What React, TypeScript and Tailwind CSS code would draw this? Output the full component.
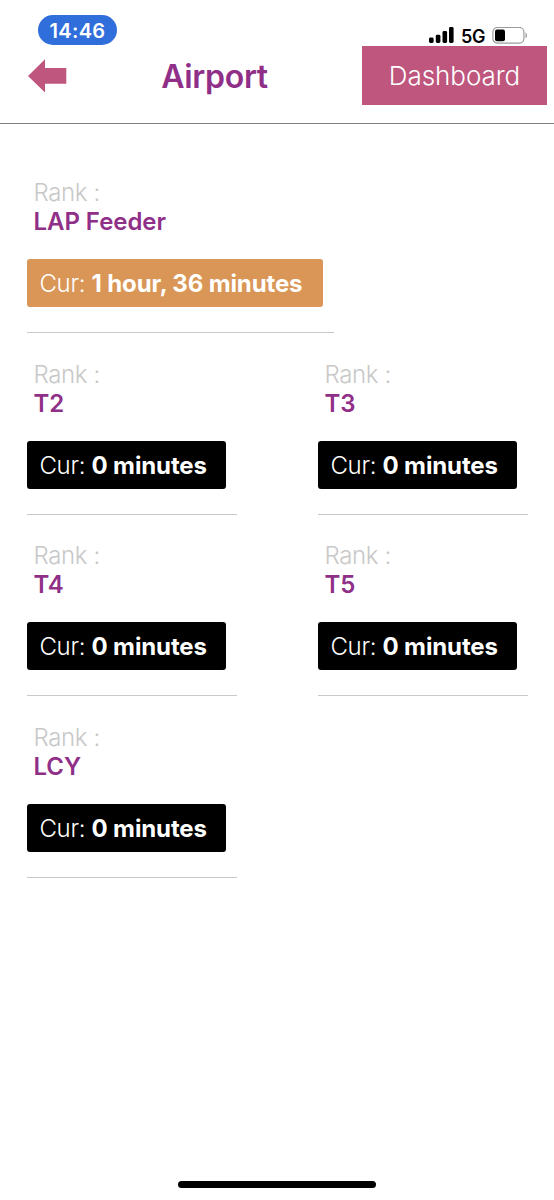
type Rank = {
  name: string;
  current: string;
  delayed?: boolean;
};

const ranks: Rank[] = [
  { name: "LAP Feeder", current: "1 hour, 36 minutes", delayed: true },
  { name: "T2", current: "0 minutes" },
  { name: "T3", current: "0 minutes" },
  { name: "T4", current: "0 minutes" },
  { name: "T5", current: "0 minutes" },
  { name: "LCY", current: "0 minutes" },
];

function StatusBar() {
  return (
    <div className="flex h-[46px] items-start justify-between pl-[38px] pr-[26px] pt-[15px]">
      <div className="flex h-[30px] w-[79px] items-center justify-center rounded-full bg-[#2f6edb] pt-[2px] text-[20px] font-semibold tracking-[0.3px] text-white">
        14:46
      </div>
      <div className="flex h-[17px] mt-3 items-center">
        <svg width="25" height="17" viewBox="0 0 25 17" fill="#000">
          <rect x="0" y="10.5" width="4.6" height="5.5" rx="1.4" />
          <rect x="6.8" y="7.8" width="4.6" height="8.2" rx="1.4" />
          <rect x="13.5" y="4" width="4.6" height="12" rx="1.4" />
          <rect x="20" y="0" width="4.6" height="16" rx="1.4" />
        </svg>
        <span className="ml-[7px] w-[31px] pt-px text-[18px] font-semibold leading-[17px] tracking-[-0.3px] text-black">5G</span>
        <svg width="36" height="17" viewBox="0 0 36 17" fill="none">
          <rect x="0.9" y="0.5" width="31" height="15.6" rx="4.5" stroke="#9c9c9c" strokeWidth="1.2" />
          <rect x="3" y="2.5" width="10" height="11.8" rx="2" fill="#000" />
          <path d="M33.5 5.4c2 .8 2 5 0 5.8z" fill="#9c9c9c" />
        </svg>
      </div>
    </div>
  );
}

function Header() {
  return (
    <header className="flex h-[78px] items-start justify-between border-b border-[#7c807c] pl-[28px] pr-[7px]">
      <button className="mt-[13px]" aria-label="Back">
        <svg width="39" height="34" viewBox="0 0 39 34" fill="#be567e">
          <path d="M0 17L17 0.3V9H38.3V24.7H17V33.5Z" />
        </svg>
      </button>
      <h1 className="mt-[11px] text-[32px] font-semibold leading-[40px] tracking-[-0.3px] text-[#902f88]">Airport</h1>
      <button className="h-[59px] w-[185px] bg-[#be567e] text-[26px] font-[350] tracking-[-0.05px] text-white">
        Dashboard
      </button>
    </header>
  );
}

function RankCard({ name, current, delayed }: Rank) {
  return (
    <section className={delayed ? "col-span-2 h-[181.7px] w-[307px]" : "h-[181.7px] w-[210px]"}>
      <div className="border-b border-[#c9c9c9] pb-[25px]">
        <p className="pl-[7px] text-[24px] font-[350] leading-[29px] tracking-[-0.35px] text-[#c8c8c8]">Rank :</p>
        <h2 className="pl-[7px] text-[24px] font-semibold leading-[29px] tracking-[-0.05px] text-[#902f88]">{name}</h2>
        <div
          className={
            delayed
              ? "mt-[23px] flex h-[48px] w-[296px] items-center whitespace-pre rounded-[3px] bg-[#d99657] pl-[13px] pt-[2px] text-[24px] font-[350] tracking-[-0.35px] text-white"
              : "mt-[23px] flex h-[48px] w-[199px] items-center whitespace-pre rounded-[3px] bg-black pl-[13px] pt-[2px] text-[24px] font-[350] tracking-[-0.35px] text-white"
          }
        >
          Cur: <span className="font-bold tracking-[-0.13px]">{current}</span>
        </div>
      </div>
    </section>
  );
}

export default function App() {
  return (
    <div className="flex h-[1200px] w-[554px] flex-col bg-white font-[Inter,sans-serif]">
      <StatusBar />
      <Header />
      <main className="grid flex-1 grid-cols-[291px_210px] content-start pl-[26.5px] pt-[54px]">
        {ranks.map((rank) => (
          <RankCard key={rank.name} {...rank} />
        ))}
      </main>
      <div className="mb-[12px] ml-[178px] h-[7px] w-[198px] rounded-full bg-black" />
    </div>
  );
}
